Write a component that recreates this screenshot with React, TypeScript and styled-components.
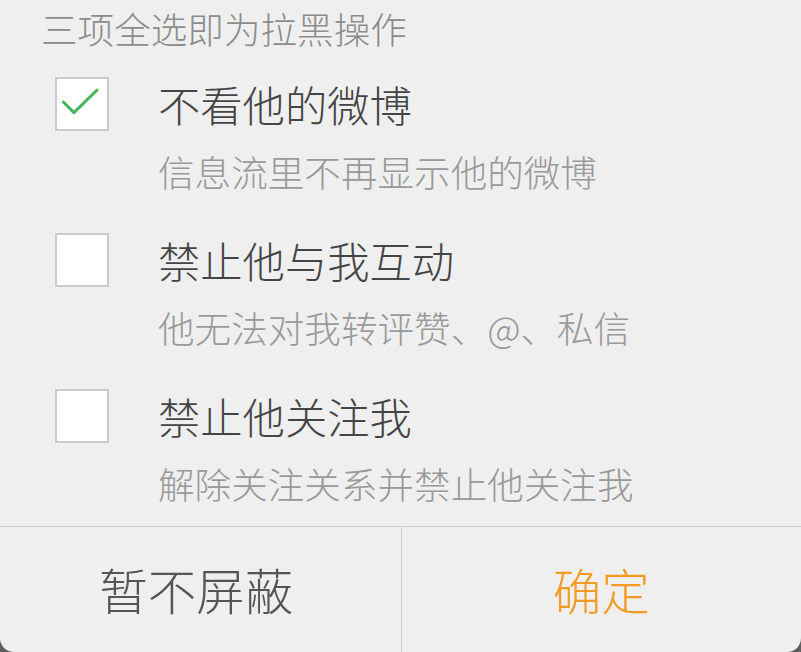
import { useState } from 'react'
import styled, { createGlobalStyle } from 'styled-components'

const GlobalStyle = createGlobalStyle`
  html, body {
    margin: 0;
    padding: 0;
    background: #5e5e5e;
  }
  body {
    font-family: "Noto Sans CJK SC", "Noto Sans", sans-serif;
    font-weight: 300;
    overflow: hidden;
  }
`

const Dialog = styled.div`
  width: 801px;
  height: 652px;
  background: #efefef;
  border-radius: 0 0 14px 14px;
  display: flex;
  flex-direction: column;
  overflow: hidden;
`

const Hint = styled.div`
  height: 58px;
  line-height: 58px;
  padding-left: 41px;
  font-size: 36.6px;
  color: #8c8c8c;
  white-space: nowrap;
`

const OptionList = styled.div`
  display: flex;
  flex-direction: column;
`

const Option = styled.label`
  display: flex;
  align-items: flex-start;
  gap: 49px;
  height: 156px;
  box-sizing: border-box;
  padding: 18px 0 0 55px;
  cursor: pointer;
`

const Box = styled.span`
  flex: none;
  width: 54px;
  height: 54px;
  margin-top: 1px;
  box-sizing: border-box;
  border: 2px solid #cbcbcb;
  background: #fff;
  display: flex;
  align-items: center;
  justify-content: center;
`

const TextCol = styled.div`
  display: flex;
  flex-direction: column;
`

const Title = styled.div`
  font-size: 42.3px;
  line-height: 56px;
  color: #444;
  white-space: nowrap;
`

const Desc = styled.div`
  margin-top: 15px;
  font-size: 36.6px;
  line-height: 50px;
  color: #999;
  white-space: nowrap;
`

const Footer = styled.div`
  flex: 1;
  display: grid;
  grid-template-columns: 1fr 1fr;
  border-top: 1.5px solid #cdcdcd;
`

const FooterButton = styled.button<{ $primary?: boolean }>`
  appearance: none;
  border: none;
  background: transparent;
  margin: 0;
  padding: ${p => (p.$primary ? '0 0 2px' : '0 8px 2px 0')};
  font-family: inherit;
  font-weight: inherit;
  font-size: 48.5px;
  color: ${p => (p.$primary ? '#f29b25' : '#555')};
  border-left: ${p => (p.$primary ? '1.5px solid #cdcdcd' : 'none')};
  cursor: pointer;
`

const Check = () => (
  <svg width="54" height="54" viewBox="0 0 54 54" style={{ position: 'relative', left: -2, top: -2 }}>
    <path d="M9 27 L20.5 38.5 L45.5 14" fill="none" stroke="#45b55a" strokeWidth="3.2" strokeLinecap="round" strokeLinejoin="round" />
  </svg>
)

const options = [
  { title: '不看他的微博', desc: '信息流里不再显示他的微博' },
  { title: '禁止他与我互动', desc: '他无法对我转评赞、@、私信' },
  { title: '禁止他关注我', desc: '解除关注关系并禁止他关注我' },
]

export default function App() {
  const [checked, setChecked] = useState([true, false, false])

  const toggle = (i: number) =>
    setChecked(c => c.map((v, j) => (j === i ? !v : v)))

  return (
    <>
      <GlobalStyle />
      <Dialog>
        <Hint>三项全选即为拉黑操作</Hint>
        <OptionList>
          {options.map((o, i) => (
            <Option key={o.title} onClick={() => toggle(i)}>
              <Box>{checked[i] && <Check />}</Box>
              <TextCol>
                <Title>{o.title}</Title>
                <Desc>{o.desc}</Desc>
              </TextCol>
            </Option>
          ))}
        </OptionList>
        <Footer>
          <FooterButton>暂不屏蔽</FooterButton>
          <FooterButton $primary>确定</FooterButton>
        </Footer>
      </Dialog>
    </>
  )
}
